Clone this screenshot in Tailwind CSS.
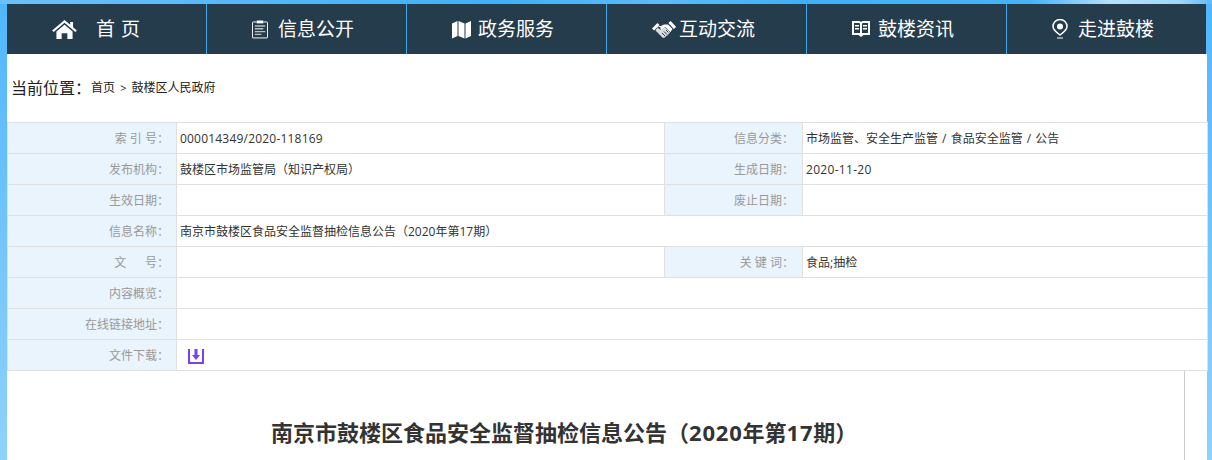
<!doctype html>
<html lang="zh-CN">
<head>
    <title>南京市鼓楼区食品安全监督抽检信息公告</title>
    <meta charset="utf-8" />
    <script src="https://cdn.jsdelivr.net/npm/@tailwindcss/browser@4"></script>
</head>
<body class="h-[460px] overflow-hidden bg-gradient-to-b from-[#4fb6fb] to-[#8fd2fa] font-['Open_Sans','Noto_Sans_CJK_SC',sans-serif] text-[12px] text-[#333]">
    <div class="h-1 bg-[linear-gradient(90deg,#6cc0fa_0,#55b8f9_250px,#3fb0f8_500px,#5cbcf9_660px,#3fb0f8_800px,#45b3f8_1030px,#b5e0fb_1110px,#a0d6fa_1180px,#5fbbf9_1212px)]"></div>
    <nav class="ml-[7px] flex h-[50px] w-[1199px] bg-[#253c4d] text-[19px] text-white">
        <a class="flex w-[200px] items-center border-r border-[#3fa9f0] pl-[45px]">
            <span class="w-[44px]">
                <svg class="block h-[19px] w-[25px]" viewBox="0 0 26 20" fill="#fff"><path d="M13 0 0 11l1.600 1.600L13 3l11.400 9.600L26 11l-4-3.400V2h-3v3zM13 5 4.500 12.200V20H10v-6h6v6h5.500v-7.800z"/></svg>
            </span>
            <span class="tracking-[6px]">首页</span>
        </a>
        <a class="flex w-[200px] items-center border-r border-[#3fa9f0] pl-[45px]">
            <span class="w-[26px]">
                <svg class="block h-[20px] w-[16px]" viewBox="0 0 17 20" fill="none"><path d="M5 2.500H1.500a1 1 0 0 0-1 1V19a.5.5 0 0 0 .5.500h15a.5.5 0 0 0 .5-.5V3.500a1 1 0 0 0-1-1H12" stroke="#fff"/><path d="M5 1h7v3H5z" fill="#fff"/><path d="M3 6h11v1.500H3zM3 9h9v1.500H3zM3 12h11v1.500H3zM3 15h7v1.500H3z" fill="#b9bfc4"/></svg>
            </span>
            <span>信息公开</span>
        </a>
        <a class="flex w-[200px] items-center border-r border-[#3fa9f0] pl-[45px]">
            <span class="w-[26px]">
                <svg class="block h-[19px] w-[19px]" viewBox="0 0 19 19" fill="#fff"><path d="M0 3.500 5.500 1v15L0 18.500zM6.500 1l6 2.500v15l-6-2.500zM13.500 3.500 19 1v15l-5.500 2.500z"/></svg>
            </span>
            <span>政务服务</span>
        </a>
        <a class="flex w-[200px] items-center border-r border-[#3fa9f0] pl-[45px]">
            <span class="w-[27px]">
                <svg class="block h-[19px] w-[24px]" viewBox="0 0 24 19" fill="none">
                    <path d="M1 9.500 6.500 4M17.500 2 23 8" stroke="#fff" stroke-width="3"/>
                    <path d="M6 6h3l3-1.500h4l4.500 4.500-2 3L13 7l-3.500 3-1.500-1 1-1z" fill="#fff"/>
                    <path d="M3.500 10.500 11 18l2-.5 1-1.500 1.500-.5 1-1.500 1-.5.5-1.500-5.500-5-3.500 3-2.500-1.500L6 7z" fill="#d9dcde"/>
                    <path d="m10 13 3 3M12 11.500l3 3M14 10l2.500 2.500" stroke="#253c4d"/>
                </svg>
            </span>
            <span>互动交流</span>
        </a>
        <a class="flex w-[200px] items-center border-r border-[#3fa9f0] pl-[45px]">
            <span class="w-[26px]">
                <svg class="block h-[18px] w-[18px]" viewBox="0 0 18 18" fill="#fff"><path fill-rule="evenodd" d="M0 1h7.500L9 2l1.500-1H18v14h-6.500L9 17l-2.500-2H0zM2 3v10h6V3.500L7 3zm8 .5V13h6V3h-5zM3 5h4v1.500H3zM3 8h4v1.500H3zM11 5h4v1.500h-4zM11 8h4v1.500h-4z"/></svg>
            </span>
            <span>鼓楼资讯</span>
        </a>
        <a class="flex w-[199px] items-center pl-[45px]">
            <span class="w-[26px]">
                <svg class="block h-[20px] w-[16px]" viewBox="0 0 16 20" fill="none"><path d="M8 16C4.500 13.500 1 10.500 1 7.500a7 7 0 0 1 14 0c0 3-3.500 6-7 8.500z" stroke="#fff" stroke-width="1.500"/><circle cx="8" cy="7.500" r="3" fill="#fff"/><path d="M5 19h6" stroke="#fff"/></svg>
            </span>
            <span>走进鼓楼</span>
        </a>
    </nav>
    <main class="ml-[7px] h-[406px] w-[1200px] bg-white">
        <div class="flex h-[68px] items-center pl-1 text-[#222]">
            <span class="text-[16px]">当前位置：</span>
            <span class="text-[12px]">首页 <span class="px-[2px] text-[11px]">&gt;</span> 鼓楼区人民政府</span>
        </div>
        <table class="w-[1200px] table-fixed border-collapse">
            <colgroup><col class="w-[169px]"><col class="w-[488px]"><col class="w-[138px]"><col class="w-[405px]"></colgroup>
            <tbody>
                <tr class="h-[31px]">
                    <th class="border border-[#e0e0e0] bg-[#e9f4fd] pt-[2px] pr-[7px] text-right font-normal text-[#999]">索 引 号：</th>
                    <td class="border border-[#e0e0e0] pt-[2px] pl-[3px] tracking-[0.2px]">000014349/2020-118169</td>
                    <th class="border border-[#e0e0e0] bg-[#e9f4fd] pt-[2px] pr-[8px] text-right font-normal text-[#999]">信息分类：</th>
                    <td class="border border-[#e0e0e0] pt-[2px] pl-[3px] [word-spacing:1px]">市场监管、安全生产监管 / 食品安全监管 / 公告</td>
                </tr>
                <tr class="h-[31px]">
                    <th class="border border-[#e0e0e0] bg-[#e9f4fd] pt-[2px] pr-[7px] text-right font-normal text-[#999]">发布机构：</th>
                    <td class="border border-[#e0e0e0] pt-[2px] pl-[3px]">鼓楼区市场监管局（知识产权局）</td>
                    <th class="border border-[#e0e0e0] bg-[#e9f4fd] pt-[2px] pr-[8px] text-right font-normal text-[#999]">生成日期：</th>
                    <td class="border border-[#e0e0e0] pt-[2px] pl-[3px] tracking-[0.3px]">2020-11-20</td>
                </tr>
                <tr class="h-[31px]">
                    <th class="border border-[#e0e0e0] bg-[#e9f4fd] pt-[2px] pr-[7px] text-right font-normal text-[#999]">生效日期：</th>
                    <td class="border border-[#e0e0e0] pl-[3px]"></td>
                    <th class="border border-[#e0e0e0] bg-[#e9f4fd] pt-[2px] pr-[8px] text-right font-normal text-[#999]">废止日期：</th>
                    <td class="border border-[#e0e0e0] pl-[3px]"></td>
                </tr>
                <tr class="h-[31px]">
                    <th class="border border-[#e0e0e0] bg-[#e9f4fd] pt-[2px] pr-[7px] text-right font-normal text-[#999]">信息名称：</th>
                    <td colspan="3" class="border border-[#e0e0e0] pt-[2px] pl-[3px]">南京市鼓楼区食品安全监督抽检信息公告（2020年第17期）</td>
                </tr>
                <tr class="h-[31px]">
                    <th class="border border-[#e0e0e0] bg-[#e9f4fd] pt-[2px] pr-[7px] text-right font-normal whitespace-pre text-[#999]">文      号：</th>
                    <td class="border border-[#e0e0e0] pl-[3px]"></td>
                    <th class="border border-[#e0e0e0] bg-[#e9f4fd] pt-[2px] pr-[8px] text-right font-normal text-[#999]">关 键 词：</th>
                    <td class="border border-[#e0e0e0] pt-[2px] pl-[3px]">食品;抽检</td>
                </tr>
                <tr class="h-[31px]">
                    <th class="border border-[#e0e0e0] bg-[#e9f4fd] pt-[2px] pr-[7px] text-right font-normal text-[#999]">内容概览：</th>
                    <td colspan="3" class="border border-[#e0e0e0] pl-[3px]"></td>
                </tr>
                <tr class="h-[31px]">
                    <th class="border border-[#e0e0e0] bg-[#e9f4fd] pt-[2px] pr-[7px] text-right font-normal text-[#999]">在线链接地址：</th>
                    <td colspan="3" class="border border-[#e0e0e0] pl-[3px]"></td>
                </tr>
                <tr class="h-[31px]">
                    <th class="border border-[#e0e0e0] bg-[#e9f4fd] pt-[2px] pr-[7px] text-right font-normal text-[#999]">文件下载：</th>
                    <td colspan="3" class="border border-[#e0e0e0] pt-[2px] pl-[11px] align-middle">
                        <svg class="block h-[16px] w-[16px]" viewBox="0 0 16 16" fill="none"><path d="M1 1v14h14V1" stroke="#7a3ff2" stroke-width="2"/><path d="M6.500 1h3v6H12l-4 5-4-5h2.500z" fill="#7a3ff2"/></svg>
                    </td>
                </tr>
            </tbody>
        </table>
        <div class="h-[90px] w-[1178px] border-r border-[#ccc] pt-[46px] pl-[264px] text-[22px] leading-[30px] font-bold text-[#333]">
            南京市鼓楼区食品安全监督抽检信息公告（<span class="tracking-[0.8px]">2020</span>年第<span class="tracking-[0.8px]">17</span>期）
        </div>
    </main>
</body>
</html>
